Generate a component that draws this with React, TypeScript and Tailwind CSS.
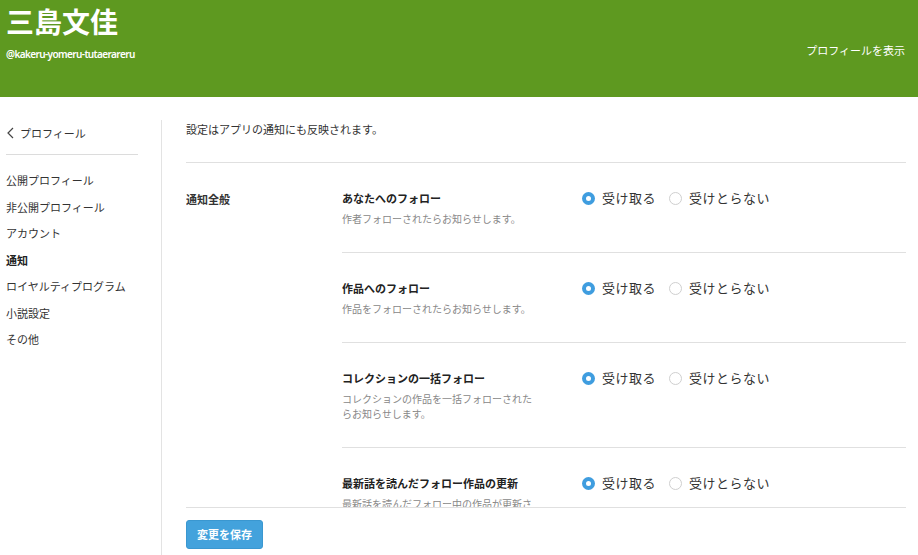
const rows = [
  {
    title: "あなたへのフォロー",
    desc: "作者フォローされたらお知らせします。",
  },
  {
    title: "作品へのフォロー",
    desc: "作品をフォローされたらお知らせします。",
  },
  {
    title: "コレクションの一括フォロー",
    desc: "コレクションの作品を一括フォローされたらお知らせします。",
  },
  {
    title: "最新話を読んだフォロー作品の更新",
    desc: "最新話を読んだフォロー中の作品が更新されたらお知らせします。",
  },
];

const menu = [
  { label: "公開プロフィール" },
  { label: "非公開プロフィール" },
  { label: "アカウント" },
  { label: "通知", active: true },
  { label: "ロイヤルティプログラム" },
  { label: "小説設定" },
  { label: "その他" },
];

const Radio = ({ checked, label }: { checked?: boolean; label: string }) => (
  <label className="flex items-center gap-[7px]">
    {checked ? (
      <span className="w-[13px] h-[13px] rounded-full bg-[#3f9ddf] flex items-center justify-center">
        <span className="w-[5px] h-[5px] rounded-full bg-white" />
      </span>
    ) : (
      <span className="w-[13px] h-[13px] rounded-full border border-[#cfcfcf] bg-white" />
    )}
    <span className="text-[13px] leading-[18px] tracking-[0.5px] text-[#333]">{label}</span>
  </label>
);

const App = () => {
  return (
    <div className="w-[918px] h-[555px] overflow-hidden bg-white font-['Noto_Sans_CJK_JP',sans-serif] text-[#333]">
      <header className="h-[97px] bg-[#5e9920] flex justify-between items-start px-[6px]">
        <div className="pt-[4px]">
          <h1 className="text-[28px] leading-[34px] font-bold text-white">三島文佳</h1>
          <p className="mt-[9px] text-[10px] leading-[14px] font-semibold text-white font-['Noto_Sans',sans-serif] tracking-[-0.6px]">
            @kakeru-yomeru-tutaerareru
          </p>
        </div>
        <a className="pt-[42px] pr-[7px] text-[11px] leading-[16px] text-white">プロフィールを表示</a>
      </header>

      <div className="flex h-[458px]">
        <aside className="w-[162px] mt-[23px] border-r border-[#e3e3e3] pl-[6px]">
          <div className="w-[132px]">
            <a className="flex items-center gap-[5px] h-[26px] text-[11px] text-[#333]">
              <svg width="9" height="12" viewBox="0 0 9 12" fill="none">
                <path d="M7 1L2 6l5 5" stroke="#444" strokeWidth="1.2" />
              </svg>
              プロフィール
            </a>
            <div className="mt-[8px] border-t border-[#dcdcdc]" />
            <ul className="mt-[12px]">
              {menu.map((m) => (
                <li
                  key={m.label}
                  className={`text-[11px] leading-[26.5px] ${m.active ? "font-bold text-[#222]" : "text-[#333]"}`}
                >
                  {m.label}
                </li>
              ))}
            </ul>
          </div>
        </aside>

        <main className="flex-1 flex flex-col pl-[24px] pr-[12px] mt-[23px]">
          <div className="h-[387px] shrink-0 overflow-hidden">
            <p className="text-[11px] leading-[18px]">設定はアプリの通知にも反映されます。</p>
            <section className="mt-[24px] border-t border-[#e0e0e0] flex">
              <div className="w-[156px] pt-[27px] text-[11px] leading-[18px] font-bold">通知全般</div>
              <div className="flex-1">
                {rows.map((r) => (
                  <div key={r.title} className="flex border-b border-[#e0e0e0] pt-[26px] pb-[26px]">
                    <div className="w-[240px]">
                      <h3 className="text-[11px] leading-[18px] font-bold text-[#222]">{r.title}</h3>
                      <p className="mt-[4px] w-[196px] text-[10px] leading-[15px] text-[#888]">{r.desc}</p>
                    </div>
                    <div className="flex items-start gap-[13px]">
                      <Radio checked label="受け取る" />
                      <Radio label="受けとらない" />
                    </div>
                  </div>
                ))}
              </div>
            </section>
          </div>
          <footer className="border-t border-[#e0e0e0] pt-[12px]">
            <button className="h-[29px] px-[10px] rounded-[3px] bg-[#43a2dc] border border-[#3a97d0] text-white text-[11px] font-bold">
              変更を保存
            </button>
          </footer>
        </main>
      </div>
    </div>
  );
};

export default App;
